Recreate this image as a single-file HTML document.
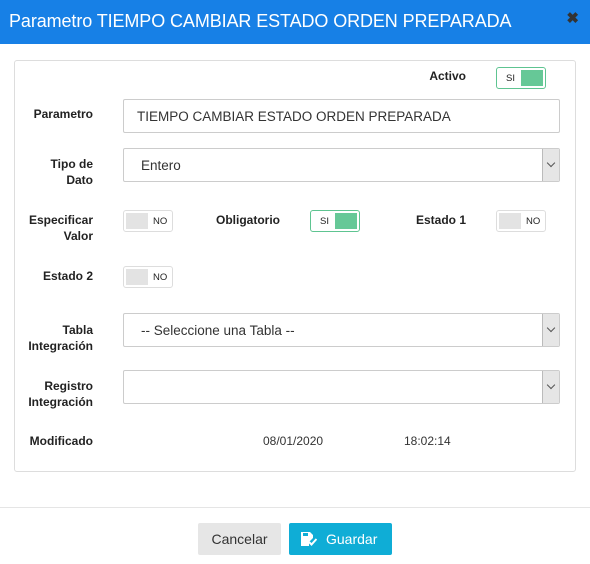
<!DOCTYPE html>
<html><head><style>
*{box-sizing:border-box;margin:0;padding:0}
body{width:590px;height:564px;background:#fff;font-family:"Liberation Sans",Arial,sans-serif;position:relative;overflow:hidden;color:#222}
.hdr{position:absolute;left:0;top:0;width:590px;height:44px;background:#1780e6;color:#fff;font-size:18px;padding:11px 0 0 9px;letter-spacing:-0.1px}
.x{position:absolute;right:11px;top:9px;font-size:15px;font-weight:bold;color:#333}
.panel{position:absolute;left:14px;top:60px;width:562px;height:412px;border:1px solid #ddd;border-radius:3px}
.lbl{position:absolute;font-size:12px;font-weight:bold;text-align:right;line-height:16px;color:#222}
.inp{position:absolute;left:123px;width:437px;height:34px;border:1px solid #ccc;border-radius:2px;font-size:13.5px;padding:9px 0 0 13px;color:#333}
.sel{padding-left:17px}
.sel .arr{position:absolute;right:0;top:0;width:17px;height:32px;background:#e6e6e6;border-left:1px solid #bbb}
.sel .arr:after{content:"";position:absolute;left:5px;top:11px;width:5px;height:5px;border-right:1.5px solid #555;border-bottom:1.5px solid #555;transform:rotate(45deg)}
.tg{position:absolute;width:50px;height:22px;border:1px solid #ddd;border-radius:3px;font-size:9.5px}
.tg.on{border-color:#5ec491}
.tg .k{position:absolute;top:2px;width:22px;height:16px;background:#e3e3e3}
.tg.on .k{background:#66c897;right:2px}
.tg.off .k{left:2px}
.tg span{position:absolute;top:5px}
.tg.on span{left:9px}.tg.off span{left:29px}
.t{position:absolute;font-size:12px;color:#333}
.line{position:absolute;left:0;top:507px;width:590px;border-top:1px solid #e5e5e5}
.btn{position:absolute;top:523px;height:32px;border-radius:2px;font-size:14px;padding-top:8px}
</style></head><body>
<div class="hdr">Parametro TIEMPO CAMBIAR ESTADO ORDEN PREPARADA</div>
<div class="x">✖</div>
<div class="panel"></div>
<div class="lbl" style="left:400px;top:68px;width:66px">Activo</div>
<div class="tg on" style="left:496px;top:67px"><span>SI</span><div class="k"></div></div>
<div class="lbl" style="left:10px;top:106px;width:83px">Parametro</div>
<div class="inp" style="top:99px">TIEMPO CAMBIAR ESTADO ORDEN PREPARADA</div>
<div class="lbl" style="left:10px;top:156px;width:83px">Tipo de<br>Dato</div>
<div class="inp sel" style="top:148px">Entero<div class="arr"></div></div>
<div class="lbl" style="left:10px;top:212px;width:83px">Especificar<br>Valor</div>
<div class="tg off" style="left:123px;top:210px"><div class="k"></div><span>NO</span></div>
<div class="lbl" style="left:200px;top:212px;width:80px">Obligatorio</div>
<div class="tg on" style="left:310px;top:210px"><span>SI</span><div class="k"></div></div>
<div class="lbl" style="left:380px;top:212px;width:86px">Estado 1</div>
<div class="tg off" style="left:496px;top:210px"><div class="k"></div><span>NO</span></div>
<div class="lbl" style="left:10px;top:268px;width:83px">Estado 2</div>
<div class="tg off" style="left:123px;top:266px"><div class="k"></div><span>NO</span></div>
<div class="lbl" style="left:10px;top:322px;width:83px">Tabla<br>Integración</div>
<div class="inp sel" style="top:313px">-- Seleccione una Tabla --<div class="arr"></div></div>
<div class="lbl" style="left:10px;top:378px;width:83px">Registro<br>Integración</div>
<div class="inp sel" style="top:370px"><div class="arr"></div></div>
<div class="lbl" style="left:10px;top:433px;width:83px">Modificado</div>
<div class="t" style="left:263px;top:434px">08/01/2020</div>
<div class="t" style="left:404px;top:434px">18:02:14</div>
<div class="line"></div>
<div class="btn" style="left:198px;width:83px;background:#e6e6e6;color:#333;text-align:center">Cancelar</div>
<div class="btn" style="left:289px;width:103px;background:#0fadd6;color:#fff;padding-left:37px">Guardar
<svg style="position:absolute;left:12px;top:9px" width="16" height="14" viewBox="0 0 16 14"><path d="M0 0h9l3 3v3l-4 4v4H0z" fill="#fff"/><rect x="2" y="1" width="5" height="3" fill="#0fadd6"/><path d="M8 10l2.5 2.5L15.5 7" stroke="#fff" stroke-width="2" fill="none"/></svg></div>
</body></html>
